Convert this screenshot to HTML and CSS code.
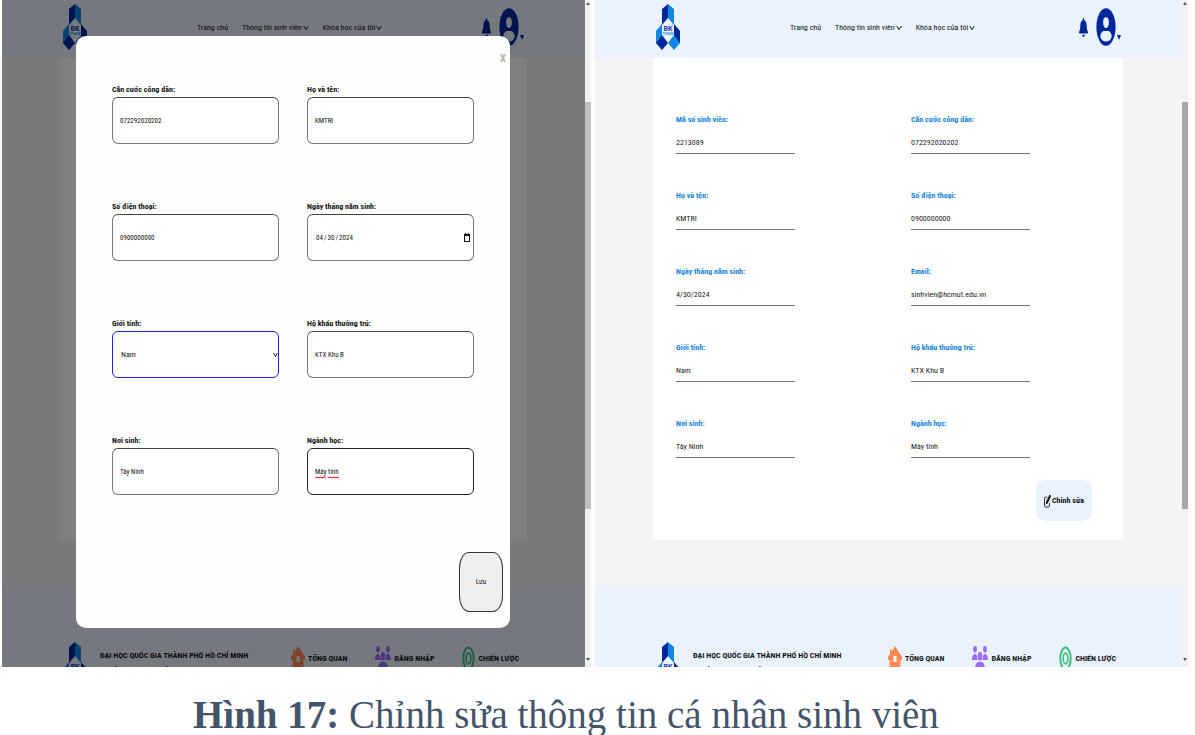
FILE: index.html
```html
<!DOCTYPE html>
<html lang="vi">
<head>
<meta charset="utf-8">
<title>Chỉnh sửa thông tin cá nhân sinh viên</title>
<link rel="stylesheet" href="styles.css">
</head>
<body>
<svg class="sprite" aria-hidden="true">
  <symbol id="logo" viewBox="0 0 24 46" preserveAspectRatio="none">
    <path fill="#00269a" d="M12 0 6 5v16l6-7z"/><path fill="#0f86e0" d="m12 0 6 5v16l-6-7z"/>
    <path fill="#0f86e0" d="m6 20-6 7v13l6-7z"/><path fill="#00269a" d="m18 20 6 7v13l-6-7z"/>
    <path fill="#00269a" d="m6 31 6 8-6 7-6-7z"/><path fill="#0f86e0" d="m18 31 6 8-6 7-6-7z"/>
    <text x="12" y="27" text-anchor="middle" class="logo-mark">BK</text>
    <text x="12" y="31" text-anchor="middle" class="logo-sub">TP.HCM</text>
  </symbol>
  <symbol id="chevron" viewBox="0 0 6 6" preserveAspectRatio="none"><path d="m.7 1 2.300 3.600L5.300 1" fill="none" stroke="currentColor" stroke-width="1"/></symbol>
  <symbol id="bell" viewBox="0 0 448 512" preserveAspectRatio="none"><path fill="currentColor" d="M224 0c-18 0-32 14-32 32v19C119 66 64 131 64 208v19c0 47-17 92-48 127l-8 9c-17 19-8 53 24 53h384c32 0 41-34 24-53l-8-9c-31-35-48-80-48-127v-19c0-77-55-142-128-157V32c0-18-14-32-32-32zm45 493c12-12 19-28 19-45H160c0 17 7 33 19 45s28 19 45 19 33-7 45-19z"/></symbol>
  <symbol id="user" viewBox="0 0 20 38" preserveAspectRatio="none">
    <ellipse cx="10" cy="19" rx="9.600" ry="18.800" fill="currentColor"/><ellipse cx="10" cy="14.500" rx="2.900" ry="5.500" class="cut"/>
    <path class="cut" d="M4.300 29C4.500 25.500 6 23 8 23h4c2 0 3.500 2.500 3.700 6-1 3-3 4.500-5.700 4.500S5.300 32 4.300 29z"/>
  </symbol>
  <symbol id="home" viewBox="0 0 14 26" preserveAspectRatio="none"><path fill="#ff8a52" fill-rule="evenodd" d="M7 0 14 11v3h-1.500v12h-11V14H0v-3L2 8V3h1.500v3zM5.500 10v6h3v-6z"/></symbol>
  <symbol id="group" viewBox="0 0 16 28" preserveAspectRatio="none"><g fill="#9b6bff"><ellipse cx="3" cy="3.500" rx="1.900" ry="3.500"/><ellipse cx="13" cy="3.500" rx="1.900" ry="3.500"/><ellipse cx="8" cy="11" rx="2.300" ry="4.500"/><path d="M0 15c0-4 1.500-6.500 3-6.500s2 1 2 3c0 2 .5 3 1 3.500H0zM16 15c0-4-1.500-6.500-3-6.500s-2 1-2 3c0 2-.5 3-1 3.500h6zM3.200 28v-5c0-4 2-6 4.800-6s4.800 2 4.800 6v5z"/></g></symbol>
  <symbol id="target" viewBox="0 0 14 26" preserveAspectRatio="none"><g fill="none" stroke="#3dbb7a"><ellipse cx="7" cy="12.500" rx="5.600" ry="11" stroke-width="2.100"/><ellipse cx="7" cy="12.500" rx="2.500" ry="5.300" stroke-width="1.700"/></g></symbol>
  <symbol id="edit" viewBox="0 0 7 14" preserveAspectRatio="none"><path d="M3.300 3.200H1.500Q.5 3.200.5 5v6q0 2 1 2h3q1 0 1-2V9" fill="none" stroke="currentColor" stroke-width=".9"/><path fill="currentColor" d="m2.200 7.500 3-6.300q.7-1 1.300 0 .6 1 0 2.200l-2.800 6-1.900.8z"/></symbol>
  <symbol id="calendar" viewBox="0 0 6 9" preserveAspectRatio="none"><path fill="currentColor" fill-rule="evenodd" d="M0 1h1V0h1v1h2V0h1v1h1v8H0zM1 3v5h4V3z"/></symbol>
  <symbol id="squiggle" viewBox="0 0 20 3" preserveAspectRatio="none"><path d="m0 2 1.500-1L3 2l1.500-1L6 2l1.500-1L9 2m2 0 1.500-1L14 2l1.500-1L17 2l1.500-1L20 2" fill="none" stroke="#f22" stroke-width="1"/></symbol>
</svg>

<figure class="figure">
  <div class="shots">
    <section class="shot">
      <div class="page">
        <header class="topbar">
          <a href="#" class="brand" aria-label="BK"><svg class="logo"><use href="#logo"/></svg></a>
          <nav class="nav"><a href="#">Trang chủ</a><button type="button">Thông tin sinh viên<svg><use href="#chevron"/></svg></button><button type="button">Khóa học của tôi<svg><use href="#chevron"/></svg></button></nav>
          <div class="account"><button type="button" aria-label="Thông báo"><svg class="bell"><use href="#bell"/></svg></button><button type="button" class="me" aria-label="Tài khoản"><svg class="user"><use href="#user"/></svg><i class="caret"></i></button></div>
        </header>
        <main class="main"><div class="card"></div></main>
        <footer class="footer">
          <svg class="logo"><use href="#logo"/></svg>
          <p class="school">ĐẠI HỌC QUỐC GIA THÀNH PHỐ HỒ CHÍ MINH<br>TRƯỜNG ĐẠI HỌC BÁCH KHOA</p>
          <a href="#"><svg class="home"><use href="#home"/></svg>TỔNG QUAN</a>
          <a href="#"><svg class="group"><use href="#group"/></svg>ĐĂNG NHẬP</a>
          <a href="#"><svg class="target"><use href="#target"/></svg>CHIẾN LƯỢC</a>
        </footer>
        <div class="overlay">
          <form class="modal" role="dialog" aria-label="Chỉnh sửa">
            <button type="button" class="close" aria-label="Đóng">x</button>
            <div class="fields">
              <div class="field"><label for="cccd">Căn cước công dân:</label><input id="cccd" type="text" value="072292020202"></div>
              <div class="field"><label for="name">Họ và tên:</label><input id="name" type="text" value="KMTRI"></div>
              <div class="field"><label for="phone">Số điện thoại:</label><input id="phone" type="text" value="0900000000"></div>
              <div class="field"><label for="dob">Ngày tháng năm sinh:</label><span class="control"><input id="dob" type="date" lang="en-US" value="2024-04-30"><svg class="calendar"><use href="#calendar"/></svg></span></div>
              <div class="field"><label for="sex">Giới tính:</label><span class="control"><select id="sex"><option>Nam</option><option>Nữ</option></select><svg class="arrow"><use href="#chevron"/></svg></span></div>
              <div class="field"><label for="home-address">Hộ khẩu thường trú:</label><input id="home-address" type="text" value="KTX Khu B"></div>
              <div class="field"><label for="birthplace">Nơi sinh:</label><input id="birthplace" type="text" value="Tây Ninh"></div>
              <div class="field"><label for="major">Ngành học:</label><span class="control"><input id="major" class="active" type="text" value="Máy tính"><svg class="squiggle"><use href="#squiggle"/></svg></span></div>
            </div>
            <button type="button" class="save">Lưu</button>
          </form>
        </div>
      </div>
      <div class="scrollbar"><i class="up"></i><div class="thumb"></div><i class="down"></i></div>
    </section>

    <section class="shot">
      <div class="page">
        <header class="topbar">
          <a href="#" class="brand" aria-label="BK"><svg class="logo"><use href="#logo"/></svg></a>
          <nav class="nav"><a href="#">Trang chủ</a><button type="button">Thông tin sinh viên<svg><use href="#chevron"/></svg></button><button type="button">Khóa học của tôi<svg><use href="#chevron"/></svg></button></nav>
          <div class="account"><button type="button" aria-label="Thông báo"><svg class="bell"><use href="#bell"/></svg></button><button type="button" class="me" aria-label="Tài khoản"><svg class="user"><use href="#user"/></svg><i class="caret"></i></button></div>
        </header>
        <main class="main">
          <div class="card">
            <dl class="profile">
              <div><dt>Mã số sinh viên:</dt><dd>2213089</dd></div>
              <div><dt>Căn cước công dân:</dt><dd>072292020202</dd></div>
              <div><dt>Họ và tên:</dt><dd>KMTRI</dd></div>
              <div><dt>Số điện thoại:</dt><dd>0900000000</dd></div>
              <div><dt>Ngày tháng năm sinh:</dt><dd>4/30/2024</dd></div>
              <div><dt>Email:</dt><dd>sinhvien@hcmut.edu.vn</dd></div>
              <div><dt>Giới tính:</dt><dd>Nam</dd></div>
              <div><dt>Hộ khẩu thường trú:</dt><dd>KTX Khu B</dd></div>
              <div><dt>Nơi sinh:</dt><dd>Tây Ninh</dd></div>
              <div><dt>Ngành học:</dt><dd>Máy tính</dd></div>
            </dl>
            <button type="button" class="edit"><svg><use href="#edit"/></svg>Chỉnh sửa</button>
          </div>
        </main>
        <footer class="footer">
          <svg class="logo"><use href="#logo"/></svg>
          <p class="school">ĐẠI HỌC QUỐC GIA THÀNH PHỐ HỒ CHÍ MINH<br>TRƯỜNG ĐẠI HỌC BÁCH KHOA</p>
          <a href="#"><svg class="home"><use href="#home"/></svg>TỔNG QUAN</a>
          <a href="#"><svg class="group"><use href="#group"/></svg>ĐĂNG NHẬP</a>
          <a href="#"><svg class="target"><use href="#target"/></svg>CHIẾN LƯỢC</a>
        </footer>
      </div>
      <div class="scrollbar dark"><i class="up"></i><div class="thumb"></div><i class="down"></i></div>
    </section>
  </div>
  <figcaption class="caption"><b>Hình 17:</b> Chỉnh sửa thông tin cá nhân sinh viên</figcaption>
</figure>
</body>
</html>
```
FILE: styles.css
```css
* { box-sizing: border-box; }
body { margin: 0; background: #fff; color: #111; overflow: hidden; font: 8px/12px "Roboto Condensed", Roboto, sans-serif; }
button, input, select { font: inherit; color: inherit; }
button { padding: 0; border: 0; background: none; cursor: pointer; }
a { color: inherit; text-decoration: none; }
svg { display: block; flex: none; }
.sprite { display: none; }
.logo-mark { font: bold 7px Roboto, sans-serif; fill: #1440a8; }
.logo-sub { font: bold 3px Roboto, sans-serif; fill: #0f86e0; }

.figure { margin: 0; height: 100vh; display: flex; flex-direction: column; }
.shots { flex: 1; min-height: 0; display: grid; grid-template-columns: 589fr 593fr; gap: 4px; padding: 0 7px 0 2px; }
.shot { display: grid; grid-template-columns: 1fr 6px; min-height: 0; overflow: hidden; }
.page { position: relative; display: flex; flex-direction: column; min-height: 0; overflow: hidden; background: #f4f4f4; }

.topbar { flex: none; height: 58px; display: flex; align-items: center; padding: 0 61px; background: #eaf2ff; }
.logo { width: 24px; height: 46px; }
.brand { margin-top: -4px; }
.nav { flex: 1; display: flex; gap: 14px; padding-left: 110px; margin-top: -2px; white-space: nowrap; }
.nav button { display: flex; align-items: center; gap: 1px; }
.nav svg { width: 6px; height: 6px; }
.account { display: flex; align-items: center; gap: 8px; color: #00269a; margin-top: -4px; }
.account button { color: inherit; }
.bell { width: 9px; height: 19px; }
.me { display: flex; align-items: flex-end; gap: 1px; }
.user { width: 20px; height: 38px; }
.cut { fill: #eaf2ff; }
.caret { border: 2px solid transparent; border-top: 5px solid #00269a; margin-bottom: 4px; }

.main { flex: none; padding: 0 59px 46px 58px; }
.card { min-height: 482px; background: #fff; padding: 54px 0 19px; display: flex; flex-direction: column; }
.profile { margin: 0; display: grid; grid-template-columns: 1fr 1fr; row-gap: 34px; }
.profile div { padding-left: 23px; }
.profile dt { line-height: 16px; font-weight: bold; color: #1583dd; }
.profile dd { margin: 0; width: 56%; padding: 7px 0 2px; line-height: 16px; color: #222; border-bottom: 1px solid #777; }
.edit { align-self: flex-end; display: flex; align-items: center; gap: 1px; height: 41px; margin: auto 31px 0 0; padding: 0 8px; border-radius: 10px; background: #eaf2ff; font-weight: bold; }
.edit svg { width: 7px; height: 14px; }

.footer { flex: 1; min-height: 0; overflow: hidden; display: flex; align-items: flex-start; padding: 56px 66px 0 61px; background: #eaf2ff; font-weight: bold; white-space: nowrap; }
.school { flex: 1; margin: 6px 0 0 13px; line-height: 15px; }
.footer a { display: flex; align-items: center; gap: 3px; height: 26px; margin: 4px 0 0 28px; }
.home { width: 14px; height: 26px; }
.group { width: 16px; height: 26px; }
.target { width: 13px; height: 26px; }

.overlay { position: absolute; inset: 0; background: rgba(0, 0, 0, .5); padding: 36px 75px 39px 74px; }
.modal { position: relative; height: 100%; display: flex; flex-direction: column; background: #fefefe; border-radius: 10px; padding: 47px 36px 16px; }
.close { position: absolute; top: 13px; right: 4px; font-size: 14px; line-height: 16px; font-weight: bold; color: #bbb; }
.fields { display: grid; grid-template-columns: 1fr 1fr; gap: 56px 28px; }
.field { display: grid; }
.field label { line-height: 14px; font-weight: bold; }
.field input, .field select { width: 100%; height: 47px; margin: 0; padding: 0 7px; font-size: 7px; background: #fff; border: 1px solid #777; border-top-color: #444; border-radius: 6px; outline: 0; }
.control { position: relative; display: block; }
.field select { appearance: none; padding: 0 8px; border-color: #2020ee; font-size: 8px; }
.arrow, .calendar, .squiggle { position: absolute; pointer-events: none; }
.arrow { width: 5px; height: 6px; right: 1px; top: 21px; }
.calendar { width: 6px; height: 9px; right: 4px; top: 19px; }
.squiggle { width: 24px; height: 3px; left: 8px; top: 28px; }
.field ::-webkit-calendar-picker-indicator { opacity: 0; }
.field .active { border-color: #222; }
.save { align-self: flex-end; width: 44px; height: 60px; margin: auto -29px 0 0; border: 1px solid #333; border-radius: 10px / 16px; background: #efefef; font-size: 7px; }

.scrollbar { display: flex; flex-direction: column; align-items: center; background: #f1f1f1; }
.thumb { width: 100%; height: 61%; margin: 97px 0 auto; background: #c1c1c1; }
.dark .thumb { background: #a8a8a8; }
.up, .down { border: 2px solid transparent; }
.up { border-top: 0; border-bottom: 3px solid #555; margin-top: 2px; }
.down { border-bottom: 0; border-top: 3px solid #555; margin-bottom: 6px; }

.caption { flex: none; padding: 28px 0 0 193px; font: 39px/40px "Liberation Serif", serif; color: #44546a; white-space: nowrap; }
```
